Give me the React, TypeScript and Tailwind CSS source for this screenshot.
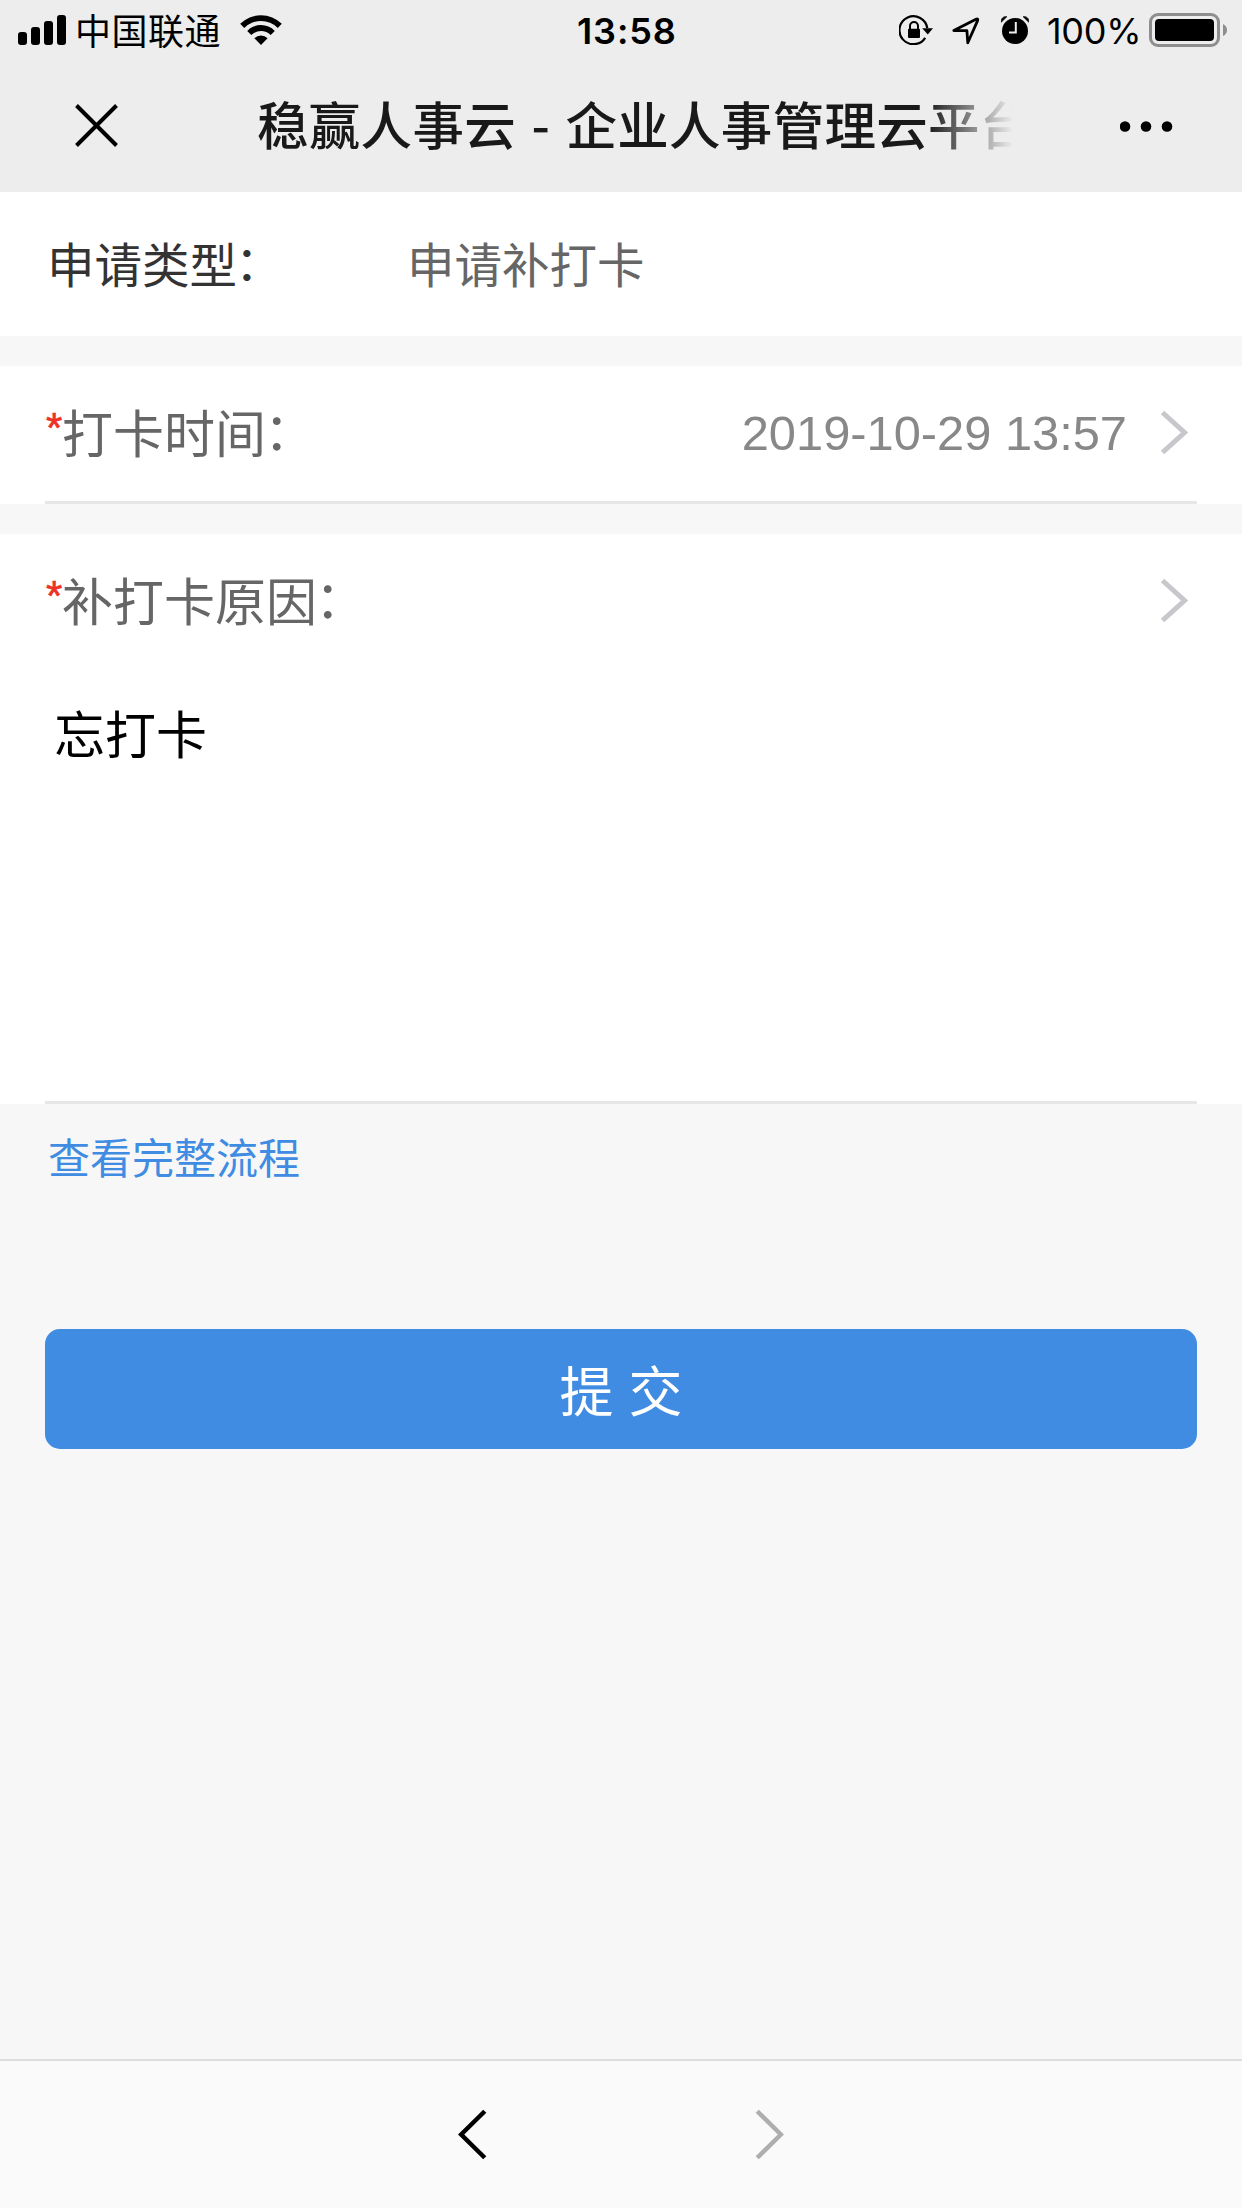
import React from "react";

type ChevronProps = {
  direction?: "left" | "right";
  width: number;
  height: number;
  stroke: number;
  className?: string;
};

const Chevron = (props: ChevronProps) => {
  const { width: w, height: h, stroke: s } = props;
  const edge = s * 0.5;
  const tip = w - s * 0.7;
  const d =
    props.direction === "left"
      ? `M${w - edge} ${edge}L${w - tip} ${h / 2}L${w - edge} ${h - edge}`
      : `M${edge} ${edge}L${tip} ${h / 2}L${edge} ${h - edge}`;
  return (
    <svg
      width={w}
      height={h}
      viewBox={`0 0 ${w} ${h}`}
      fill="none"
      stroke="currentColor"
      strokeWidth={s}
      className={props.className}
    >
      <path d={d} />
    </svg>
  );
};

const SignalIcon = () => (
  <svg width="48" height="30" viewBox="0 0 48 30" className="block">
    <rect x="0" y="17" width="9" height="13" rx="3" />
    <rect x="13" y="12" width="9" height="18" rx="3" />
    <rect x="26" y="6" width="9" height="24" rx="3" />
    <rect x="39" y="0" width="9" height="30" rx="3" />
  </svg>
);

const WifiIcon = () => (
  <svg width="42" height="30" viewBox="0 0 42 30" className="block">
    <path d="M0.2 8.8A29.5 29.5 0 0 1 41.8 8.8L37.8 12.9A24 24 0 0 0 4.2 12.9Z" />
    <path d="M7.2 15.9A19.2 19.2 0 0 1 34.8 15.9L30.7 20.1A13.8 13.8 0 0 0 11.3 20.1Z" />
    <path d="M14.4 23.2A9.3 9.3 0 0 1 27.6 23.2L21 30Z" />
  </svg>
);

const RotationLockIcon = () => (
  <svg width="34" height="30" viewBox="0 0 34 30" className="block" fill="none">
    <path
      d="M28.3 13.2A14 14 0 1 0 26.2 22.8"
      stroke="#000"
      strokeWidth="2.2"
    />
    <path d="M23.2 13.2H34L28.8 19.5Z" fill="#000" />
    <rect x="9" y="13.7" width="12" height="9.3" rx="1" fill="#000" />
    <path
      d="M11 14.5V11A4 4 0 0 1 19 11V14.5"
      stroke="#000"
      strokeWidth="2"
    />
  </svg>
);

const LocationIcon = () => (
  <svg width="28" height="28" viewBox="0 0 28 28" className="block" fill="none">
    <path
      d="M1.8 13.6L24 2.2Q26.4 1.2 25.6 3.6L15.8 25.8L14.9 13.6Z"
      stroke="#000"
      strokeWidth="2.8"
      strokeLinejoin="round"
    />
  </svg>
);

const AlarmIcon = () => (
  <svg width="28" height="28" viewBox="0 0 28 28" className="block">
    <circle cx="14" cy="15" r="13" />
    <path d="M0.2 6.2C0 2.5 2.2 0.2 5.8 0.7Z" stroke="#000" strokeWidth="0.8" />
    <path d="M27.8 6.2C28 2.5 25.8 0.2 22.2 0.7Z" stroke="#000" strokeWidth="0.8" />
    <path d="M14.8 6V16.5H8" fill="none" stroke="#ededed" strokeWidth="2" />
  </svg>
);

const BatteryIcon = () => (
  <svg width="78" height="34" viewBox="0 0 78 34" className="block">
    <rect x="1.5" y="1.5" width="68" height="31" rx="7.5" fill="none" stroke="#8e8e8e" strokeWidth="3" />
    <rect x="6" y="6" width="59" height="22" rx="4" />
    <path d="M74 11Q78 13 78 17Q78 21 74 23Z" fill="#8e8e8e" />
  </svg>
);

const StatusBar = () => (
  <div className="flex h-[60px] items-start">
    <div className="flex w-[577px] pl-[18px]">
      <div className="pt-[15px]">
        <SignalIcon />
      </div>
      <span className="ml-[9px] mt-[2px] w-[165px] text-[36px] leading-[54px] tracking-[0.5px]">
        中国联通
      </span>
      <div className="pt-[15px]">
        <WifiIcon />
      </div>
    </div>
    <span className="w-[322px] pt-[4px] font-[Inter,sans-serif] text-[36px] font-semibold leading-[54px] tracking-[0.9px]">
      13:58
    </span>
    <div className="flex">
      <div className="pt-[15px]">
        <RotationLockIcon />
      </div>
      <div className="ml-[19px] pt-[17px]">
        <LocationIcon />
      </div>
      <div className="ml-[21px] pt-[16px]">
        <AlarmIcon />
      </div>
      <span className="ml-[18px] w-[102px] pt-[4px] font-[Inter,sans-serif] text-[36px] leading-[54px] tracking-[-0.3px]">
        100%
      </span>
      <div className="pt-[13px]">
        <BatteryIcon />
      </div>
    </div>
  </div>
);

const NavBar = () => (
  <div className="flex h-[132px] items-start pl-[75px]">
    <svg width="43" height="43" viewBox="0 0 43 43" stroke="#000" strokeWidth="4" className="mt-[44px]">
      <path d="M1.5 1.5L41.5 41.5M41.5 1.5L1.5 41.5" />
    </svg>
    <h1 className="ml-[139px] mt-[25px] w-[756px] overflow-hidden whitespace-nowrap text-[51.5px] font-medium leading-[76px] tracking-[0.3px] text-[#191919] [mask-image:linear-gradient(to_right,#000_670px,transparent_756px)] [word-spacing:3.5px]">
      稳赢人事云 - 企业人事管理云平台
    </h1>
    <svg width="53" height="11" viewBox="0 0 53 11" className="ml-[107px] mt-[61px]">
      <circle cx="5" cy="5.5" r="5.3" />
      <circle cx="26" cy="5.5" r="5.3" />
      <circle cx="47" cy="5.5" r="5.3" />
    </svg>
  </div>
);

// the full-width colon sits low in its cell, so it is lifted to the middle of the line
const Colon = () => <span className="relative -left-[2px] -top-[3px]">：</span>;

const Label = (props: { text: string }) => (
  <div className="-mt-[3px] flex text-[51px] leading-[76px] text-[#666]">
    <span className="-mt-[3px] w-[17px] pl-px font-['Liberation_Sans',sans-serif] text-[42px] text-[#ee3124] [-webkit-text-stroke:0.6px_#ee3124]">
      *
    </span>
    <span>
      {props.text}
      <Colon />
    </span>
  </div>
);

const App = () => {
  return (
    <div className="flex h-[2208px] w-[1242px] flex-col overflow-hidden bg-[#f7f7f7] font-['Noto_Sans_CJK_SC','Liberation_Sans',sans-serif] text-black">
      <header className="h-[192px] bg-[#ededed]">
        <StatusBar />
        <NavBar />
      </header>

      <section className="flex h-[144px] items-center bg-white pb-[2px] pl-[47px] text-[47.5px] leading-[70px]">
        <span className="w-[360px] text-[#333]">
          申请类型
          <Colon />
        </span>
        <span className="text-[#666]">申请补打卡</span>
      </section>

      <section className="mt-[30px] h-[138px] bg-white px-[45px]">
        <div className="flex h-full items-center border-b-[3px] border-[#e6e6e6] pb-[2px] pr-[9px]">
          <Label text="打卡时间" />
          <span className="ml-auto mr-[33px] font-['Liberation_Sans',sans-serif] text-[48.8px] leading-[60px] text-[#888]">
            2019-10-29 13:57
          </span>
          <Chevron width={28} height={45} stroke={5} className="text-[#c7c7cc]" />
        </div>
      </section>

      <section className="mt-[30px] h-[570px] bg-white px-[45px]">
        <div className="flex h-full flex-col border-b-[3px] border-[#e6e6e6]">
          <div className="flex h-[135px] items-center justify-between pb-[2px] pr-[9px]">
            <Label text="补打卡原因" />
            <Chevron width={28} height={45} stroke={5} className="text-[#c7c7cc]" />
          </div>
          <p className="pl-[9px] pt-[25px] text-[51px] leading-[76px]">忘打卡</p>
        </div>
      </section>

      <a className="ml-[48px] mt-[22px] h-[60px] text-[42px] leading-[60px] text-[#408ce2]">
        查看完整流程
      </a>

      <button className="mx-[45px] mt-[143px] h-[120px] rounded-[15px] bg-[#408ce2] text-[54px] leading-[80px] text-white [word-spacing:3px]">
        提 交
      </button>

      <footer className="mt-auto flex h-[149px] items-start border-t-2 border-[#dedede] bg-[#fafafa] pl-[458px] pt-[48px]">
        <Chevron direction="left" width={29} height={51} stroke={4.5} />
        <Chevron width={29} height={51} stroke={4.5} className="ml-[268px] text-[#aeaeb0]" />
      </footer>
    </div>
  );
};

export default App;
